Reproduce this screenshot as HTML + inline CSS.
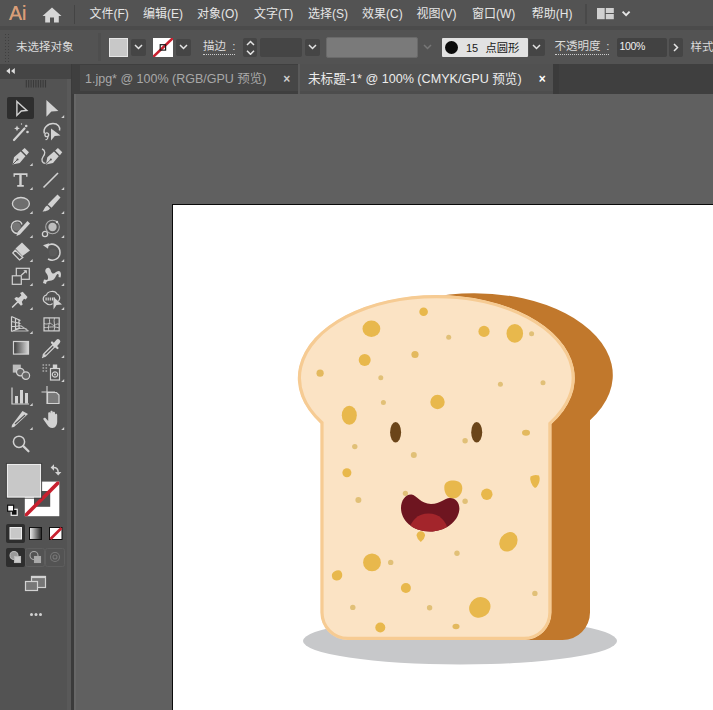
<!DOCTYPE html>
<html><head><meta charset="utf-8">
<style>
*{box-sizing:border-box;margin:0;padding:0}
html,body{width:713px;height:710px;overflow:hidden;background:#5e5e5e;font-family:"Liberation Sans","Noto Sans CJK SC",sans-serif;}
.abs{position:absolute}
#menubar{left:0;top:0;width:713px;height:28px;background:#535353}
#menuline{left:0;top:26px;width:713px;height:4.5px;background:#4b4b4b;border-bottom:1.5px solid #3a3a3a}
.mi{position:absolute;top:6px;font-size:12px;line-height:16px;color:#e6e6e6;white-space:nowrap}
#ctrl{left:0;top:30px;width:713px;height:34px;background:#535353}
.ct{position:absolute;font-size:11.5px;line-height:14px;color:#dcdcdc;white-space:nowrap}
.dd{position:absolute;background:#454545;border-radius:2px;top:9px;height:17px;width:15px}
.dd svg{position:absolute;left:3px;top:5px}
#tabbar{left:72px;top:64px;width:641px;height:29.800px;background:#3f3f3f}
.tab{position:absolute;top:2px;height:26px;font-size:12.5px;line-height:26px;white-space:nowrap}
#toolbox{left:0;top:64px;width:72px;height:646px;background:#535353}
#canvas{left:74px;top:93.500px;width:639px;height:617px;background:#606060}
</style></head><body>
<!-- canvas -->
<div id="canvas" class="abs"></div>
<div class="abs" style="left:172px;top:204px;width:545px;height:510px;background:#fff;border:1px solid #0a0a0a"></div>
<svg class="abs" style="left:0;top:0" width="713" height="710" viewBox="0 0 713 710">
  <ellipse cx="460" cy="641" rx="157" ry="23.5" fill="#c7c8ca"/>
  <!-- crust -->
  <path fill="#c1782c" d="M358.400 420.200 A138.600 82 0 1 1 590 420.200 L590 612.500 A27.500 27.500 0 0 1 562.500 640 L400 640 Z"/>
  <clipPath id="fc"><path d="M320.400 423.440 A138.500 83 0 1 1 551.500 424.070 L551.500 612.500 A27.500 27.500 0 0 1 524 640 L347.900 640 A27.500 27.500 0 0 1 320.400 612.500 Z"/></clipPath>
  <path fill="#fbe3c4" stroke="#f6cb93" stroke-width="6.400" clip-path="url(#fc)" d="M320.400 423.440 A138.500 83 0 1 1 551.500 424.070 L551.500 612.500 A27.500 27.500 0 0 1 524 640 L347.900 640 A27.500 27.500 0 0 1 320.400 612.500 Z"/>
  <g fill="#e8b84c">
    <circle cx="423.600" cy="311.700" r="4.300"/>
    <ellipse cx="371.400" cy="328.800" rx="8.900" ry="8.200"/>
    <circle cx="364.700" cy="360" r="6"/>
    <circle cx="415" cy="354.500" r="3.600" fill="#e3b95e"/>
    <circle cx="320.100" cy="373.200" r="3.600" fill="#e3b95e"/>
    <circle cx="380.800" cy="377.800" r="2.500" fill="#e1c077"/>
    <circle cx="383.400" cy="402.400" r="2.500" fill="#e1c077"/>
    <ellipse cx="349.300" cy="415.200" rx="7.500" ry="9.500"/>
    <circle cx="437.500" cy="402" r="7.200"/>
    <circle cx="448.700" cy="337.300" r="2.500" fill="#e1c077"/>
    <circle cx="484" cy="331.400" r="5.600"/>
    <ellipse cx="514.800" cy="333.400" rx="8.300" ry="9.300"/>
    <circle cx="531.600" cy="333.800" r="2.500" fill="#e1c077"/>
    <circle cx="500.400" cy="384.300" r="2.500" fill="#e1c077"/>
    <circle cx="543" cy="382.700" r="2.500" fill="#e1c077"/>
    <circle cx="354.800" cy="446.600" r="2.700" fill="#e1c077"/>
    <circle cx="413.800" cy="455.100" r="3" fill="#e1c077"/>
    <circle cx="346.900" cy="472.700" r="4.500"/>
    <circle cx="358.400" cy="499.900" r="3" fill="#e1c077"/>
    <circle cx="405.400" cy="493.300" r="2.600" fill="#e1c077"/>
    <path d="M416.500 535.500 a4.300 4.300 0 1 1 8.600 0 q-0.500 3.500 -4.300 6.500 q-3.800 -3 -4.300 -6.500z"/>
    <path d="M444.300 487 C444.500 482 449 480.300 454 480.500 C459 480.700 462.500 483.500 462.300 488.500 C462 494 458.500 498.500 453 498.500 C447.500 498.500 444 493 444.300 487 Z"/>
    <circle cx="465.100" cy="501.200" r="2.700" fill="#e1c077"/>
    <circle cx="465.100" cy="440.700" r="2.700" fill="#e1c077"/>
    <ellipse cx="526" cy="432.800" rx="4" ry="3" fill="#e3b95e"/>
    <path d="M530.500 476.500 q4 -2.500 8.500 -1 q1.500 4 -0.500 8.500 q-1.500 3.500 -3.500 4 q-2.500 -1.500 -4 -5.500 q-1.500 -3.500 -0.500 -6z"/>
    <circle cx="486.800" cy="494.300" r="5.700"/>
    <ellipse cx="508.400" cy="541.800" rx="8.500" ry="10.300" transform="rotate(35 508.400 541.800)"/>
    <circle cx="457" cy="553.300" r="2.700" fill="#e1c077"/>
    <circle cx="390.700" cy="562.400" r="2.700" fill="#e1c077"/>
    <circle cx="372" cy="562.400" r="8.900"/>
    <path d="M332 574 q3 -4.500 8 -3.500 q3 2 2 6.500 q-2 4 -6 3.500 q-5 -1 -4 -6.500z"/>
    <circle cx="405.900" cy="588" r="5"/>
    <circle cx="352.800" cy="607.400" r="2.700" fill="#e1c077"/>
    <circle cx="429.600" cy="607.800" r="2.700" fill="#e1c077"/>
    <circle cx="380.300" cy="627.500" r="5"/>
    <circle cx="534.900" cy="593.400" r="2.700" fill="#e1c077"/>
    <ellipse cx="479.800" cy="607.400" rx="11" ry="10" transform="rotate(-35 479.800 607.400)"/>
    <ellipse cx="456" cy="626.500" rx="3.500" ry="2.700" fill="#e3b95e"/>
  </g>
  <ellipse cx="395.600" cy="432.200" rx="5.500" ry="10.300" fill="#6b4519"/>
  <ellipse cx="476.700" cy="432.200" rx="5.500" ry="10.300" fill="#6b4519"/>
  <clipPath id="mc"><path id="mouth" d="M411.500 494.500 C416.500 495 421 504 431 504 C441 504 444 498 450 498 C456 498 460 503 459.300 510 C458 522 445 531.500 430 531.500 C412 531.500 401 520 401 508 C401 500 406 494 411.500 494.500 Z"/></clipPath>
  <path fill="#6e1520" d="M411.500 494.500 C416.500 495 421 504 431 504 C441 504 444 498 450 498 C456 498 460 503 459.300 510 C458 522 445 531.500 430 531.500 C412 531.500 401 520 401 508 C401 500 406 494 411.500 494.500 Z"/>
  <ellipse cx="428.500" cy="531" rx="19" ry="17.500" fill="#a3252b" clip-path="url(#mc)"/>
</svg>

<!-- toolbox -->
<div id="toolbox" class="abs"></div>
<div class="abs" style="left:66.500px;top:64px;width:4.500px;height:646px;background:#595959"></div>
<div class="abs" style="left:0;top:64px;width:71px;height:14.500px;background:#454545"></div>
<div class="abs" style="left:71px;top:64px;width:3.300px;height:646px;background:#3b3b3b"></div>
<div class="abs" style="left:74.300px;top:94px;width:1.700px;height:616px;background:#676767"></div>
<svg class="abs" style="left:0;top:0" width="74" height="710" viewBox="0 0 74 710">
  <defs><linearGradient id="gr" x1="0" x2="1" y1="0" y2="0"><stop offset="0" stop-color="#3a3a3a"/><stop offset="1" stop-color="#d8d8d8"/></linearGradient>
  <linearGradient id="gr2" x1="0" x2="1" y1="0" y2="0"><stop offset="0" stop-color="#f4f4f4"/><stop offset="1" stop-color="#222"/></linearGradient></defs>
  <path d="M10 68 L6.200 71 L10 74 Z M14.800 68 L11 71 L14.800 74 Z" fill="#dedede"/>
  <path d="M26.3 80 v7.500 M28.7 80 v7.500 M31.1 80 v7.500 M33.5 80 v7.500 M35.9 80 v7.500 M38.3 80 v7.500 M40.7 80 v7.500 M43.1 80 v7.500 M45.5 80 v7.500" stroke="#393939" stroke-width="1.100"/>
  <rect x="7" y="97" width="27" height="22" rx="2" fill="#2e2e2e"/>
<g transform="translate(20.5 108)"><path d="M-3.600 -6.600 L6.300 2.500 L0.800 3 L-3.600 7.400 Z" stroke="#d2d2d2" fill="none" stroke-width="1.400" stroke-linejoin="miter"/></g>
<g transform="translate(52 108)"><path d="M-5.600 -8 L6.400 3 L-0.600 3.600 L-5.600 8.800 Z" fill="#d2d2d2"/></g><path d="M61.2 118.1 l3 -3 v3 z" fill="#cfcfcf"/>
<g transform="translate(20.5 132)"><path d="M-6.500 8 L4 -3.500" stroke="#d2d2d2" fill="none" stroke-width="2.200" stroke-linecap="round"/><path d="M-3.500 -6.500 l0.900 2 l2 0.900 l-2 0.900 l-0.900 2 l-0.900 -2 l-2 -0.900 l2 -0.900z" fill="#d2d2d2"/><circle cx="5.700" cy="-6" r="1.300" fill="#d2d2d2"/><circle cx="7" cy="0" r="1.300" fill="#d2d2d2"/><circle cx="1" cy="-8" r="0.700" fill="#d2d2d2"/></g>
<g transform="translate(52 132)"><path d="M-7.500 1.500 C-9.500 -4 -4 -8.500 1 -8.500 C6 -8.500 8.500 -5 7.500 -1.500" stroke="#d2d2d2" fill="none" stroke-width="1.500"/><circle cx="-5.200" cy="2.700" r="1.900" stroke="#d2d2d2" fill="none" stroke-width="1.300"/><path d="M-4.500 4.500 C-3.500 6 -5 8 -6.500 7.500" stroke="#d2d2d2" fill="none" stroke-width="1.200"/><path d="M-1 -3.500 L8.500 3.500 L2.800 4 L-1 8.500 Z" fill="#d2d2d2"/></g>
<g transform="translate(20.5 156)"><g transform="translate(-0.300 0.800) scale(0.950)"><path d="M-8 8 L-6.500 0.500 L0.500 -5.500 L5.500 -0.500 L-0.500 6.500 Z M-8 8 L-3 3" fill="#d2d2d2"/><path d="M-7.600 7.600 L-3.200 3.200" stroke="#535353" stroke-width="1"/><circle cx="-2.800" cy="2.800" r="1.100" fill="#535353"/><path d="M1.700 -6.700 L4.700 -9.200 L9.200 -4.700 L6.700 -1.700 Z" fill="#d2d2d2"/></g></g><path d="M29.7 166.1 l3 -3 v3 z" fill="#cfcfcf"/>
<g transform="translate(52 156)"><g transform="translate(-1 0.800)"><g transform="translate(2.500 0) scale(0.950)"><path d="M-8 8 L-6.500 0.500 L0.500 -5.500 L5.500 -0.500 L-0.500 6.500 Z M-8 8 L-3 3" fill="#d2d2d2"/><path d="M-7.600 7.600 L-3.200 3.200" stroke="#535353" stroke-width="1"/><circle cx="-2.800" cy="2.800" r="1.100" fill="#535353"/><path d="M1.700 -6.700 L4.700 -9.200 L9.200 -4.700 L6.700 -1.700 Z" fill="#d2d2d2"/></g><path d="M-9 -8 C-5.500 -6.500 -5.500 -3 -8 0 C-10.500 3.500 -8.500 6.500 -5.500 6.500" stroke="#d2d2d2" fill="none" stroke-width="1.300"/></g></g>
<g transform="translate(20.5 180)"><path d="M-7 -6.800 H7 V-3.200 H5.600 V-5 H1.200 V5 H3.300 V6.800 H-3.300 V5 H-1.200 V-5 H-5.600 V-3.200 H-7 Z" fill="#d2d2d2"/></g><path d="M29.7 190.1 l3 -3 v3 z" fill="#cfcfcf"/>
<g transform="translate(52 180)"><path d="M-8.500 7.500 L6 -7" stroke="#d2d2d2" fill="none" stroke-width="1.600"/></g><path d="M61.2 190.1 l3 -3 v3 z" fill="#cfcfcf"/>
<g transform="translate(20.5 204)"><ellipse cx="0.400" cy="-0.200" rx="8.500" ry="6.300" fill="#6e6e6e" stroke="#d2d2d2" stroke-width="1.300"/></g><path d="M29.7 214.1 l3 -3 v3 z" fill="#cfcfcf"/>
<g transform="translate(52 204)"><path d="M5.500 -9.500 L8.500 -6.500 L-0.500 3.800 L-4.200 0.200 Z" fill="#d2d2d2"/><path d="M-4.800 1.500 L-2 4.300 C-3.500 7 -7 7.500 -9.500 7.500 C-8 6 -7.500 3 -4.800 1.500 Z" fill="#d2d2d2"/></g><path d="M61.2 214.1 l3 -3 v3 z" fill="#cfcfcf"/>
<g transform="translate(20.5 228)"><path d="M-3 5.500 C-8 5 -10.500 0 -8.500 -4 C-6.500 -8 0 -8.500 1.500 -3.500" stroke="#d2d2d2" fill="none" stroke-width="1.400"/><circle cx="-4" cy="-1.500" r="4.300" fill="#777"/><path d="M7 -7 L9.500 -4.500 L-0.500 6.500 L-4 8 L-3 4 Z" fill="#d2d2d2"/></g><path d="M29.7 238.1 l3 -3 v3 z" fill="#cfcfcf"/>
<g transform="translate(52 228)"><g transform="translate(-1.500 1)"><circle cx="2" cy="-2" r="6.800" stroke="#d2d2d2" fill="none" stroke-width="1.100" stroke-opacity="0.700"/><circle cx="2" cy="-2" r="4.200" fill="#bdbdbd"/><circle cx="-5.500" cy="5" r="2.600" stroke="#d2d2d2" fill="none" stroke-width="1.300"/><circle cx="6.500" cy="-7" r="1.200" fill="#d2d2d2"/></g></g><path d="M61.2 238.1 l3 -3 v3 z" fill="#cfcfcf"/>
<g transform="translate(20.5 252)"><g transform="translate(1.500 0)"><path d="M0 -9.500 L8 -1.500 L0.500 4 L-6.500 -3.500 Z" fill="#d2d2d2"/><path d="M-6.800 -1.800 L-9.200 1 L-2.500 8 L0.800 5.500 Z" stroke="#d2d2d2" fill="none" stroke-width="1.300"/></g></g><path d="M29.7 262.1 l3 -3 v3 z" fill="#cfcfcf"/>
<g transform="translate(52 252)"><path d="M-4.500 -6.500 C1 -10 8 -6 8 0.500 C8 6.500 1.500 10 -4 7" stroke="#d2d2d2" fill="none" stroke-width="1.500"/><path d="M-9 -6.800 L-3 -8.800 L-4 -3.200 Z" fill="#d2d2d2"/><circle cx="1" cy="0.500" r="4" fill="#5a5a5a"/></g><path d="M61.2 262.1 l3 -3 v3 z" fill="#cfcfcf"/>
<g transform="translate(20.5 276)"><g transform="translate(0.800 0.800)"><rect x="-5" y="-8.500" width="13" height="11" stroke="#d2d2d2" fill="none" stroke-width="1.200"/><rect x="-9" y="-1" width="9" height="8.500" fill="#535353" stroke="#d2d2d2" stroke-width="1.200"/><path d="M0 -1.500 L5 -6" stroke="#d2d2d2" fill="none" stroke-width="1.200"/><path d="M2 -6.500 H5.500 V-3 Z" fill="#d2d2d2"/></g></g><path d="M29.7 286.1 l3 -3 v3 z" fill="#cfcfcf"/>
<g transform="translate(52 276)"><path d="M-9 7 L-8 3.500 L-5 4 C-3 3 -4 -1 -6 -3 C-8 -5.500 -5.500 -9 -3 -8 C-1 -7 -1.500 -4.500 0 -3 C2 -1 4 -5 6.500 -5 C9 -5 9.500 -1.500 8.500 1.500 L6.500 1 C7 -1 6.500 -2.500 5.500 -2 C4 -1 3 4 -0.500 4.500 C-3 5 -4 4.500 -5.500 6 L-6 8 Z" fill="#d2d2d2"/></g><path d="M61.2 286.1 l3 -3 v3 z" fill="#cfcfcf"/>
<g transform="translate(20.5 300)"><g transform="scale(0.880)"><path d="M-0.500 -8 L2.500 -9.500 L8 -3.500 L6 -0.500 L4 -1.500 L1.500 2 L2.500 5 L0.500 6.500 L-7 -1.500 L-5 -3.500 L-2 -2.500 L1 -5.500 Z" fill="#d2d2d2"/><path d="M-3.500 2.500 L-9 8" stroke="#d2d2d2" fill="none" stroke-width="1.800" stroke-linecap="round"/></g></g><path d="M29.7 310.1 l3 -3 v3 z" fill="#cfcfcf"/>
<g transform="translate(52 300)"><path d="M-6 3 C-10 1 -9.500 -4 -5.500 -5 C-4.500 -9 3 -10 5 -6 C8 -5 8.500 -1 6.500 1 M-6 3 C-3 6 0 4.500 0.500 3.500" stroke="#d2d2d2" fill="none" stroke-width="1.200"/><path d="M-6.500 -1 H3" stroke="#d2d2d2" stroke-width="3" stroke-dasharray="1.200 0.900"/><path d="M1.500 -3 L10 4.500 L4.500 5 L1.500 9.500 Z" fill="#d2d2d2"/></g><path d="M61.2 310.1 l3 -3 v3 z" fill="#cfcfcf"/>
<g transform="translate(20.5 324)"><path d="M-9 -7.500 V7.500 M-9 -7.500 L0 -3.500 M-9 -2.500 L0 -0.500 M-9 2.500 L0 2 M-9 7.500 L0 4 M-5 -5.800 V6 M-1.500 -4 V4.500" stroke="#d2d2d2" fill="none" stroke-width="1.200"/><path d="M-5 4.500 H6 M-7 7 H8 M0 1.500 L8 7" stroke="#d2d2d2" fill="none" stroke-width="1.100" stroke-opacity="0.800"/></g><path d="M29.7 334.1 l3 -3 v3 z" fill="#cfcfcf"/>
<g transform="translate(52 324)"><g transform="translate(0 1.400)"><rect x="-8" y="-7.500" width="15.200" height="13" stroke="#d2d2d2" fill="none" stroke-width="1.200"/><path d="M-8 -2 C-4 0 -2 -4 0 -1 C2 2 5 -3 7 -1 M-3 -7.500 C-1 -3 -5 1 -3 5.500 M2.500 -7.500 C1 -4 4 1 2 5.500 M-8 2 C-5 3 -1 0 7 2.500" stroke="#d2d2d2" fill="none" stroke-width="1" stroke-opacity="0.850"/></g></g>
<g transform="translate(20.5 348)"><rect x="-7" y="-6.500" width="15" height="12.600" fill="url(#gr)" stroke="#d2d2d2" stroke-width="1.200"/></g>
<g transform="translate(52 348)"><path d="M-7.500 7.200 L2.500 -2.800" stroke="#d2d2d2" stroke-width="4" stroke-linecap="round" fill="none"/><path d="M-6.800 6.500 L1.500 -1.800" stroke="#535353" stroke-width="1.500" stroke-linecap="round"/><path d="M-9.300 9.300 L-7 7" stroke="#d2d2d2" stroke-width="1.600" stroke-linecap="round"/><path d="M0 -5.500 L5.500 0" stroke="#d2d2d2" stroke-width="2.200" stroke-linecap="round"/><path d="M3 -3 L6 -6.500" stroke="#d2d2d2" stroke-width="4.600" stroke-linecap="round"/></g><path d="M61.2 358.1 l3 -3 v3 z" fill="#cfcfcf"/>
<g transform="translate(20.5 372)"><g transform="translate(1.300 0.600)"><rect x="-9" y="-8" width="8" height="8" fill="#bdbdbd"/><circle cx="-1.500" cy="-0.500" r="3.800" fill="#666" stroke="#d2d2d2" stroke-width="1.200"/><circle cx="4" cy="3" r="3.800" fill="#666" stroke="#d2d2d2" stroke-width="1.200"/></g></g>
<g transform="translate(52 372)"><rect x="-1.500" y="-3.500" width="9" height="11.500" stroke="#d2d2d2" fill="none" stroke-width="1.200"/><rect x="0.800" y="-7.500" width="4.400" height="3.500" fill="#d2d2d2"/><circle cx="3" cy="2.500" r="2.700" stroke="#d2d2d2" fill="none" stroke-width="1.200"/><circle cx="3" cy="2.500" r="0.900" fill="#d2d2d2"/><path d="M-9.500 -7 h1.600 M-6.500 -7 h1.600 M-3.500 -7 h1.600 M-9.500 -4 h1.600 M-6.500 -4 h1.600 M-9.500 -1 h1.600 M-6.500 -1 h1.600" stroke="#aaa" stroke-width="1.600"/></g><path d="M61.2 382.1 l3 -3 v3 z" fill="#cfcfcf"/>
<g transform="translate(20.5 396)"><path d="M-8.500 -8.500 V8 H8.500" stroke="#d2d2d2" fill="none" stroke-width="1.200"/><rect x="-5.500" y="0" width="3" height="7.500" fill="#d2d2d2"/><rect x="-0.500" y="-6" width="3" height="13.500" fill="#d2d2d2"/><rect x="4.500" y="-3" width="3" height="10.500" fill="#d2d2d2"/></g><path d="M29.7 406.1 l3 -3 v3 z" fill="#cfcfcf"/>
<g transform="translate(52 396)"><path d="M-5 -10 V8 M-10.500 -4 H3" stroke="#d2d2d2" fill="none" stroke-width="1.100"/><path d="M-4.500 -3.500 H4.500 L7 -1 V7.500 H-4.500 Z" fill="#7a7a7a" stroke="#d2d2d2" stroke-width="1.200"/></g>
<g transform="translate(20.5 420)"><path d="M2 -9 L7.500 -6 L-6.500 7 L-9 7.500 L-8.500 5 Z" fill="#d2d2d2"/><path d="M-5.500 4 L4.500 -5" stroke="#535353" stroke-width="1.200"/></g><path d="M29.7 430.1 l3 -3 v3 z" fill="#cfcfcf"/>
<g transform="translate(52 420)"><path d="M-3.800 -1 V-6.500 C-3.800 -8.300 -1.600 -8.300 -1.600 -6.500 V-8 C-1.600 -9.800 0.700 -9.800 0.700 -8 V-7 C0.700 -8.800 3 -8.800 3 -7 V-5 C3 -6.600 5.200 -6.600 5.200 -5 V1.500 C5.200 5 3.500 8 0.500 8 C-2.500 8 -3.500 6.500 -5 4.500 L-8.500 -0.500 C-9.300 -1.800 -7.500 -3 -6.500 -2 L-3.800 1 Z" fill="#d2d2d2"/></g><path d="M61.2 430.1 l3 -3 v3 z" fill="#cfcfcf"/>
<g transform="translate(20.5 444)"><circle cx="-1.500" cy="-2.200" r="5.600" stroke="#d2d2d2" fill="none" stroke-width="1.500"/><path d="M2.800 2.100 L8 7.300" stroke="#d2d2d2" fill="none" stroke-width="2.200" stroke-linecap="round"/></g>
  <!-- fill/stroke -->
  <rect x="24.800" y="481.600" width="34.500" height="34.600" fill="#fff"/>
  <rect x="34" y="491" width="16.200" height="15.800" fill="#4f4f4f"/>
  <clipPath id="sc"><rect x="24.800" y="481.600" width="34.500" height="34.600"/></clipPath><path d="M24.800 516.200 L59.300 481.600" stroke="#c8202f" stroke-width="3.600" clip-path="url(#sc)"/>
  <rect x="6.400" y="463.400" width="35.200" height="34.700" fill="none" stroke="#3c3c3c" stroke-width="1"/>
  <rect x="7.400" y="464.400" width="33.200" height="32.700" fill="#c8c8c8" stroke="#f4f4f4" stroke-width="1"/>
  <!-- swap -->
  <path d="M53.500 467.500 Q58.200 467.500 58.200 472.500" fill="none" stroke="#d2d2d2" stroke-width="1.500"/><path d="M54 464.300 V470.700 L50.600 467.500 Z M55 472 H61.400 L58.200 475.400 Z" fill="#d2d2d2"/>
  <!-- default -->
  <rect x="11.200" y="509.300" width="6" height="6" fill="#111" stroke="#f2f2f2" stroke-width="1.200"/><rect x="7.600" y="505.200" width="6" height="6" fill="#fff" stroke="#111" stroke-width="1.200"/>
  <!-- color/gradient/none -->
  <rect x="6" y="524" width="19" height="19" rx="2" fill="#2e2e2e"/>
  <rect x="10" y="527.500" width="11.500" height="11.500" fill="#c8c8c8" stroke="#eee"/>
  <rect x="29.500" y="527.500" width="12" height="12" fill="url(#gr2)" stroke="#111"/>
  <rect x="49.500" y="527.500" width="12.500" height="12" fill="#fff" stroke="#111"/><path d="M50.500 539 L61.500 528" stroke="#c8202f" stroke-width="2.600"/>
  <!-- draw modes -->
  <rect x="6" y="548" width="19" height="19" rx="2" fill="#2e2e2e"/>
  <g fill="none" stroke="#bbb" stroke-width="1.100"><circle cx="14" cy="555.500" r="4" fill="#9a9a9a"/><rect x="14.500" y="556.500" width="6" height="6" fill="#ccc"/></g>
  <g fill="none" stroke="#a8a8a8" stroke-width="1.100"><circle cx="34" cy="555.500" r="4"/><rect x="34.500" y="556.500" width="6" height="6" fill="#aaa"/></g>
  <g fill="none" stroke="#777" stroke-width="1.100"><circle cx="55" cy="557" r="4.500"/><circle cx="55" cy="557" r="2"/></g>
  <rect x="25.500" y="548.500" width="19" height="18" rx="2" fill="none" stroke="#5e5e5e"/><rect x="45.500" y="548.500" width="19" height="18" rx="2" fill="none" stroke="#5e5e5e"/>
  <!-- screen mode -->
  <rect x="31.500" y="576.500" width="14" height="11" fill="#777" stroke="#d2d2d2" stroke-width="1.200"/><path d="M31.500 577 h14" stroke="#d2d2d2" stroke-width="2.200"/>
  <rect x="25.500" y="581.500" width="12" height="9" fill="#777" stroke="#d2d2d2" stroke-width="1.200"/>
  <circle cx="31.500" cy="614.500" r="1.500" fill="#d2d2d2"/><circle cx="36" cy="614.500" r="1.500" fill="#d2d2d2"/><circle cx="40.500" cy="614.500" r="1.500" fill="#d2d2d2"/>
</svg>

<!-- tab bar -->
<div id="tabbar" class="abs">
  <div class="tab" style="left:7.500px;width:218.500px;top:1px;height:25.500px;line-height:28px;background:#464646;color:#a8a8a8"><span style="position:absolute;left:5.500px">1.jpg* @ 100% (RGB/GPU 预览)</span><span style="position:absolute;left:203.800px;color:#cdcdcd;font-weight:bold;font-size:12px">×</span></div>
  <div class="abs" style="left:226px;top:0;width:1.500px;height:30px;background:#5a5a5a"></div>
  <div class="tab" style="left:227.500px;width:253px;background:#515151;color:#ececec;height:29.800px;top:0;line-height:30px;border-bottom:3px solid #4d4d4d"><span style="position:absolute;left:8.500px;font-size:12.600px">未标题-1* @ 100% (CMYK/GPU 预览)</span><span style="position:absolute;left:239.300px;font-weight:bold;font-size:12px;color:#fff">×</span></div>
  <div class="abs" style="left:480.500px;top:0;width:6.500px;height:30px;background:#3b3b3b"></div>
</div>

<!-- menubar -->
<div id="menubar" class="abs">
  <span class="abs" style="left:8.500px;top:1px;font-size:21px;line-height:24px;color:#d99e78;transform-origin:0 0;transform:scaleX(0.93);text-shadow:0 0 0.6px #d99e78">Ai</span>
  <svg class="abs" style="left:42px;top:7px" width="20" height="16" viewBox="0 0 20 16"><path d="M10 0.500 L0.500 9 L3.200 9 L3.200 15.500 L8 15.500 L8 10.500 L12 10.500 L12 15.500 L16.800 15.500 L16.800 9 L19.500 9 Z" fill="#d6d6d6"/></svg>
  <div class="abs" style="left:74px;top:5px;width:1px;height:19px;background:#444"></div>
  <span class="mi" style="left:89.500px">文件(F)</span>
  <span class="mi" style="left:143px">编辑(E)</span>
  <span class="mi" style="left:197px">对象(O)</span>
  <span class="mi" style="left:254px">文字(T)</span>
  <span class="mi" style="left:308px">选择(S)</span>
  <span class="mi" style="left:362px">效果(C)</span>
  <span class="mi" style="left:416.500px">视图(V)</span>
  <span class="mi" style="left:472px">窗口(W)</span>
  <span class="mi" style="left:531.800px">帮助(H)</span>
  <div class="abs" style="left:585px;top:4px;width:2px;height:20px;background:#494949"></div>
  <svg class="abs" style="left:597.200px;top:7.700px" width="36" height="13" viewBox="0 0 36 13"><rect x="0" y="0" width="7.700" height="11.200" fill="#d0d0d0"/><rect x="8.800" y="0" width="8" height="5" fill="#d0d0d0"/><rect x="8.800" y="6" width="8" height="5.200" fill="#d0d0d0"/><path d="M25.600 3.600 L29.100 7.100 L32.600 3.600" fill="none" stroke="#e6e6e6" stroke-width="1.900"/></svg>
</div>
<div id="menuline" class="abs"></div>

<!-- control bar -->
<div id="ctrl" class="abs">
  <svg class="abs" style="left:4px;top:4px" width="6" height="28" viewBox="0 0 6 28"><path d="M1.500 0 V28 M4.500 0 V28" stroke="#3f3f3f" stroke-width="1" stroke-dasharray="1 2"/></svg>
  <span class="ct" style="left:16px;top:10px">未选择对象</span>
  <div class="abs" style="left:98px;top:3px;width:3px;height:28px;background:#4e4e4e"></div>
  <div class="abs" style="left:108.600px;top:8px;width:19.700px;height:19px;background:#c8c8c8;border:1px solid #e6e6e6"></div>
  <div class="dd" style="left:131px"><svg width="9" height="6" viewBox="0 0 9 6"><path d="M1 1 L4.500 4.500 L8 1" fill="none" stroke="#e4e4e4" stroke-width="1.500"/></svg></div>
  <div class="abs" style="left:153px;top:8px;width:20px;height:19px;background:#fff;overflow:hidden"><svg width="20" height="19" viewBox="0 0 20 19"><path d="M0 19 L20 0" stroke="#c8202f" stroke-width="2.600"/><rect x="7.200" y="6.700" width="5.400" height="5.400" fill="none" stroke="#1a1a1a" stroke-width="1.200"/></svg></div>
  <div class="dd" style="left:175.500px"><svg width="9" height="6" viewBox="0 0 9 6"><path d="M1 1 L4.500 4.500 L8 1" fill="none" stroke="#e4e4e4" stroke-width="1.500"/></svg></div>
  <span class="ct" style="left:203px;top:10px;border-bottom:1px dotted #ccc;line-height:13px;padding-bottom:1px;word-spacing:3px">描边 :</span>
  <div class="abs" style="left:243px;top:8px;width:14px;height:19px;background:#454545;border-radius:2px"><svg class="abs" style="left:2.500px;top:2px" width="9" height="15" viewBox="0 0 9 15"><path d="M1 5 L4.500 1.500 L8 5 M1 10.800 L4.500 14.300 L8 10.800" fill="none" stroke="#e4e4e4" stroke-width="1.500"/></svg></div>
  <div class="abs" style="left:260px;top:8px;width:42px;height:19px;background:#454545;border-radius:2px"></div>
  <div class="dd" style="left:305px"><svg width="9" height="6" viewBox="0 0 9 6"><path d="M1 1 L4.500 4.500 L8 1" fill="none" stroke="#e4e4e4" stroke-width="1.500"/></svg></div>
  <div class="abs" style="left:326px;top:6.500px;width:92px;height:21px;background:#7a7a7a;border-radius:2px;border:1px solid #6a6a6a"></div>
  <svg class="abs" style="left:423px;top:14px" width="9" height="6" viewBox="0 0 9 6"><path d="M1 1 L4.500 4.500 L8 1" fill="none" stroke="#777" stroke-width="1.500"/></svg>
  <div class="abs" style="left:442px;top:7.600px;width:86px;height:19.400px;background:#e2e2e2;border-radius:1px"></div>
  <div class="abs" style="left:444.500px;top:10.500px;width:13.500px;height:13.500px;border-radius:50%;background:#0a0a0a"></div>
  <span class="ct" style="left:466px;top:10.500px;color:#1a1a1a;font-size:11px">15</span>
  <span class="ct" style="left:485.500px;top:10.500px;color:#1a1a1a;font-size:11.300px">点圆形</span>
  <div class="dd" style="left:528.500px;width:16.500px;border-radius:0 2px 2px 0"><svg width="9" height="6" viewBox="0 0 9 6"><path d="M1 1 L4.500 4.500 L8 1" fill="none" stroke="#e4e4e4" stroke-width="1.500"/></svg></div>
  <span class="ct" style="left:554.500px;top:10px;border-bottom:1px dotted #ccc;line-height:13px;padding-bottom:1px;word-spacing:2.500px">不透明度 :</span>
  <div class="abs" style="left:617px;top:8px;width:50px;height:19px;background:#424242;border-radius:2px"></div>
  <span class="ct" style="left:619.500px;top:8.500px;font-size:10.500px;color:#f0f0f0;letter-spacing:-0.3px">100%</span>
  <div class="abs" style="left:669px;top:8px;width:14px;height:19px;background:#454545;border-radius:2px"><svg class="abs" style="left:4px;top:5px" width="6" height="9" viewBox="0 0 6 9"><path d="M1 1 L4.500 4.500 L1 8" fill="none" stroke="#e4e4e4" stroke-width="1.500"/></svg></div>
  <span class="ct" style="left:690.500px;top:10px">样式</span>
</div>
</body></html>
